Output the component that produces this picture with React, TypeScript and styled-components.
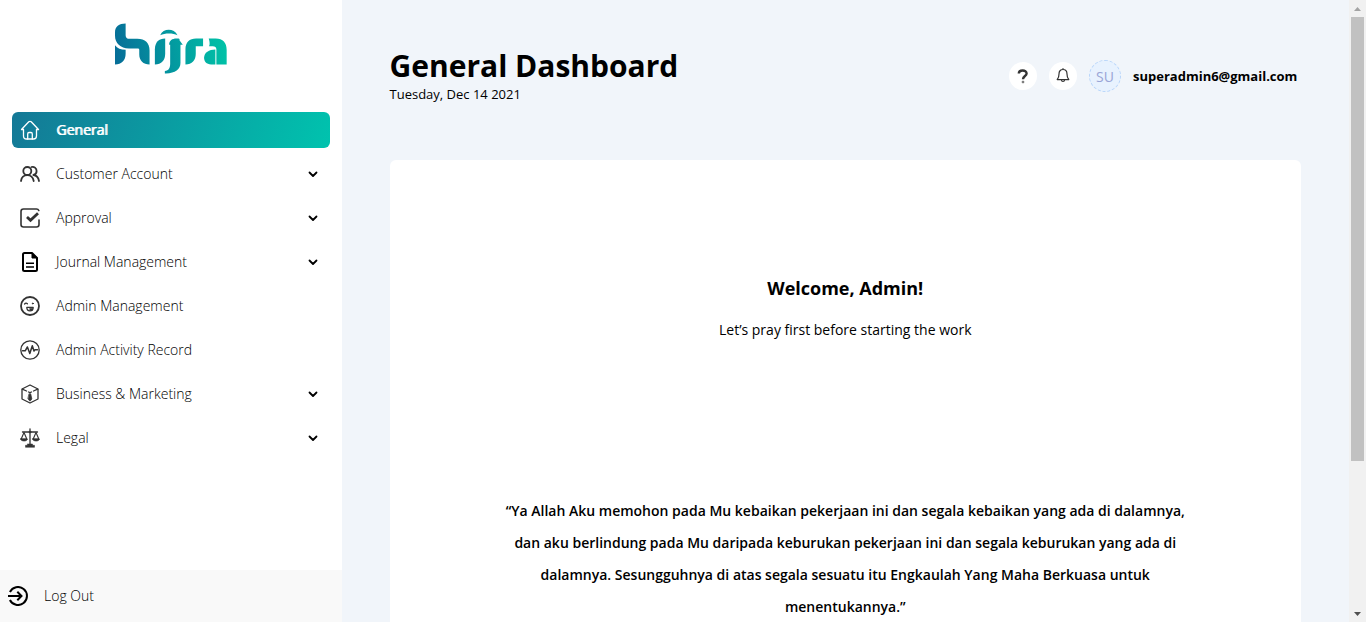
import React from "react";
import styled, { createGlobalStyle, css } from "styled-components";

const GlobalStyle = createGlobalStyle`
  *, *::before, *::after { box-sizing: border-box; }
  body {
    margin: 0;
    color: #000;
    background: #f1f5fa;
    font-family: "Open Sans", "Noto Sans", sans-serif;
    font-size: 14px;
  }
  h1, h2, p, ul { margin: 0; padding: 0; }
  button { font: inherit; color: inherit; border: 0; cursor: pointer; }
`;

const Shell = styled.div`
  display: flex;
  height: 100vh;
  overflow: hidden;
`;

const Sidebar = styled.aside`
  display: flex;
  flex-direction: column;
  flex: none;
  width: 25%;
  background: #fff;
`;

const LogoLink = styled.a`
  display: flex;
  justify-content: center;
  padding: 23px 0 38px;
`;

const Menu = styled.ul`
  display: flex;
  flex-direction: column;
  flex: 1;
  gap: 8px;
  padding: 0 12px;
  list-style: none;
`;

const MenuButton = styled.button<{ $active?: boolean }>`
  display: flex;
  align-items: center;
  gap: 16px;
  width: 100%;
  height: 36px;
  padding: 0 8px;
  border-radius: 6px;
  background: none;
  font-weight: 300;
  line-height: 18px;
  text-align: left;
  ${({ $active }) =>
    $active &&
    css`
      color: #fff;
      font-weight: 400;
      text-shadow: 1px 0 0 #fff;
      background: linear-gradient(110deg, #147896, #00c3ae);
    `}
`;

const MenuLabel = styled.span`
  flex: 1;
`;

const LogoutButton = styled.button`
  display: flex;
  align-items: center;
  gap: 16px;
  height: 52px;
  padding: 0 8px;
  background: #f9f9f9;
  font-weight: 300;
  line-height: 18px;
`;

const Main = styled.main`
  display: flex;
  flex-direction: column;
  flex: 1;
  min-width: 0;
  padding: 44px 48px 0;
  overflow: hidden;
`;

const Header = styled.header`
  display: flex;
  flex: none;
  justify-content: space-between;
  align-items: flex-start;
  height: 116px;
`;

const Title = styled.h1`
  font-size: 30px;
  line-height: 44px;
  font-weight: 700;
`;

const DateText = styled.p`
  font-size: 13px;
  line-height: 12px;
`;

const Account = styled.div`
  display: flex;
  align-items: center;
  gap: 12px;
  height: 64px;
`;

const RoundButton = styled.button`
  display: flex;
  align-items: center;
  justify-content: center;
  width: 28px;
  height: 28px;
  padding: 0;
  border-radius: 50%;
  background: #fff;
`;

const Avatar = styled.span`
  display: flex;
  align-items: center;
  justify-content: center;
  width: 32px;
  height: 32px;
  border: 1px dashed #b9d6fb;
  border-radius: 50%;
  background: #e8f2fe;
  color: #9aa5d6;
`;

const Email = styled.span`
  font-size: 13px;
  font-weight: 700;
  min-width: 168px;
`;

const Card = styled.section`
  flex: none;
  min-height: 740px;
  padding: 116px 112px;
  border-radius: 6px;
  background: #fff;
  text-align: center;
`;

const Welcome = styled.h2`
  font-size: 18px;
  line-height: 24px;
  font-weight: 700;
`;

const Subtitle = styled.p`
  margin-top: 20px;
  line-height: 20px;
`;

const Prayer = styled.p`
  margin-top: 155px;
  line-height: 32px;
  font-weight: 600;
`;

const ScrollTrack = styled.div`
  display: flex;
  flex-direction: column;
  align-items: center;
  flex: none;
  width: 17px;
  background: #f1f1f1;
`;

const ScrollArrow = styled.span`
  display: flex;
  align-items: center;
  justify-content: center;
  height: 17px;
`;

const ScrollThumb = styled.span`
  width: 13px;
  height: 75.5%;
  background: #c1c1c1;
`;

const ScrollRail = styled.div`
  display: flex;
  flex: 1;
`;

type IconProps = { children: React.ReactNode; size?: number; color?: string; strokeWidth?: number };

const Icon = ({ children, size = 20, color = "#333", strokeWidth = 1.5 }: IconProps) => (
  <svg
    width={size}
    height={size}
    viewBox={`0 0 ${size} ${size}`}
    fill="none"
    stroke={color}
    strokeWidth={strokeWidth}
    strokeLinecap="round"
    strokeLinejoin="round"
    aria-hidden="true"
  >
    {children}
  </svg>
);

const Logo = () => (
  <svg width="112" height="51" viewBox="45 38 337 152" role="img" aria-label="hijra">
    <defs>
      <linearGradient id="brand" gradientUnits="userSpaceOnUse" x1="45" y1="140" x2="381" y2="90">
        <stop offset="0" stopColor="#066e98" />
        <stop offset="1" stopColor="#00c3a7" />
      </linearGradient>
    </defs>
    <g fill="url(#brand)">
      <path d="M77 39V74Q77 85 89 85H112C136 85 149 98 149 120V162C130 162 118 150 118 132V118Q118 114 114 114H87C61 114 45 98 45 76V66C45 48 57 39 77 39Z" />
      <path d="M45 104C52 113 62 118 77 118V130C77 150 65 162 45 162Z" />
      <path d="M196 84V130C196 150 185 162 165 162V116C165 96 177 84 196 84Z" />
      <path d="M181 74C190 52 223 52 233 74C220 67 195 67 181 74Z" />
      <path d="M208 103C208 90 217 84 230 84H236Q241 84 239 89L249 103H242V158C242 178 225 190 195 189V182C207 181 211 172 211 160V103Z" />
      <path d="M310 84V107H288V130C288 150 277 162 257 162V116C257 96 269 84 289 84Z" />
      <path d="M327 84H348C370 84 381 97 381 118V162H350V116C350 111 346 107 339 107H328Q332 100 327 84Z" />
      <path d="M347 117V162H334C320 162 313 153 313 142C313 126 328 117 347 117Z" />
    </g>
  </svg>
);

const HomeIcon = () => (
  <Icon color="#fff" strokeWidth={1.3}>
    <path d="M1.5 9.5 8.8 1.8Q10 .8 11.2 1.8L18.5 9.5H16.5V16Q16.5 19 13.5 19H6.5Q3.5 19 3.5 16V9.5Z" />
    <path d="M7.7 19V14Q7.7 12.5 9 12.5H11Q12.3 12.5 12.3 14V19" />
  </Icon>
);

const UsersIcon = () => (
  <Icon strokeWidth={1.8}>
    <circle cx="7.3" cy="7" r="4" />
    <path d="M1 17C1.5 13.5 4 11.2 7.3 11.2S13 13.5 13.7 17" />
    <path d="M11.5 3C14 2.2 16.6 4.2 16.6 7C16.6 9 15.2 10.7 13.4 11C16.5 11.3 18.4 13.6 19 17" />
  </Icon>
);

const ApprovalIcon = () => (
  <Icon strokeWidth={1.6}>
    <path d="M19 12V16.5Q19 19 16.5 19H3.5Q1 19 1 16.5V3.5Q1 1 3.5 1H16.5Q18.2 1 18.8 2.5" />
    <path d="M7 9 10.5 12.3 18 5.2" strokeWidth="2.8" strokeLinecap="butt" strokeLinejoin="miter" />
  </Icon>
);

const JournalIcon = () => (
  <Icon color="#000" strokeWidth={2}>
    <path d="M12 1H4.5Q3 1 3 2.5V17.5Q3 19 4.5 19H15.5Q17 19 17 17.5V6Z" />
    <path d="M12 1.5V6H17Z" fill="#000" strokeWidth="1" />
    <path d="M6 11.3H14M6 15H14" strokeWidth="1.6" strokeLinecap="butt" />
  </Icon>
);

const SmileIcon = () => (
  <Icon strokeWidth={1.8}>
    <circle cx="10" cy="10" r="9" />
    <path d="M4.6 8Q6 6.4 7.4 7.8" strokeWidth="1.3" />
    <circle cx="12.8" cy="7.5" r=".5" fill="#333" strokeWidth="1" />
    <path d="M6.8 11.3H13.2C13.2 13.8 12 14.9 10 14.9S6.8 13.8 6.8 11.3Z" strokeWidth="1.3" />
    <path d="M9.8 12.3H12.6V14.3H9.8Z" fill="#333" strokeWidth=".4" />
  </Icon>
);

const ActivityIcon = () => (
  <Icon strokeWidth={1.5}>
    <circle cx="10" cy="10" r="9.2" strokeWidth="1.3" />
    <path d="M2.5 10.8H5.2L7.4 7L9.8 13.5L12.3 5.8L14 11L15 9.8H17.5" />
  </Icon>
);

const BusinessIcon = () => (
  <Icon strokeWidth={1.3}>
    <path d="M10 1 18 5V15L10 19L2 15V5Z" />
    <path d="M2.3 5.2 6.5 7M17.7 5.2 13.5 7M8.5 8 10 8.6 11.5 8" />
    <path d="M9.3 9.8H10.7L11.9 15L10 17.2L8.1 15Z" fill="#333" strokeWidth=".7" />
  </Icon>
);

const LegalIcon = () => (
  <Icon strokeWidth={1.3}>
    <path d="M10 .8V16M2.5 4H17.5" />
    <circle cx="10" cy="4" r="1.1" fill="#333" strokeWidth=".5" />
    <path d="M4 4.5 1.2 11H6.8ZM16 4.5 13.2 11H18.8Z" strokeWidth="1.1" />
    <path d="M.5 11H7.5C7 13.8 1 13.8 .5 11ZM12.5 11H19.5C19 13.8 13 13.8 12.5 11Z" fill="#333" strokeWidth=".6" />
    <path d="M7.5 16H12.5V17.3H14.5V19.3H5.5V17.3H7.5Z" fill="#333" strokeWidth=".5" />
  </Icon>
);

const LogoutIcon = () => (
  <Icon color="#000" strokeWidth={2}>
    <path d="M1.9 6A9 9 0 1 1 1.9 14" strokeLinecap="butt" />
    <path d="M0 10H13M9.3 5.7 13.5 10 9.3 14.3" strokeLinecap="butt" strokeLinejoin="miter" />
  </Icon>
);

const ChevronIcon = () => (
  <Icon size={18} color="#000" strokeWidth={1.8}>
    <path d="M5.5 7.5 9 11 12.5 7.5" />
  </Icon>
);

const HelpIcon = () => (
  <Icon size={18} strokeWidth={2.4}>
    <path d="M4.8 6.6C4.8 2.6 12.6 2.4 12.6 6.6C12.6 9 9 9.2 9 12.2" strokeLinecap="butt" />
    <circle cx="9" cy="15" r=".3" strokeWidth="2" />
  </Icon>
);

const BellIcon = () => (
  <Icon size={18} strokeWidth={1.2}>
    <path d="M9 2.5C6.2 2.5 5 4.6 5 7C5 10.3 4.3 11 3.2 12.6H14.8C13.7 11 13 10.3 13 7C13 4.6 11.8 2.5 9 2.5ZM9 2.5V1.6" />
    <path d="M7.5 13C7.5 15 10.5 15 10.5 13" />
  </Icon>
);

const menu = [
  { label: "General", icon: <HomeIcon />, active: true },
  { label: "Customer Account", icon: <UsersIcon />, expandable: true },
  { label: "Approval", icon: <ApprovalIcon />, expandable: true },
  { label: "Journal Management", icon: <JournalIcon />, expandable: true },
  { label: "Admin Management", icon: <SmileIcon /> },
  { label: "Admin Activity Record", icon: <ActivityIcon /> },
  { label: "Business & Marketing", icon: <BusinessIcon />, expandable: true },
  { label: "Legal", icon: <LegalIcon />, expandable: true },
];

export default function App() {
  return (
    <>
      <GlobalStyle />
      <Shell>
        <Sidebar>
          <LogoLink href="#"><Logo /></LogoLink>
          <Menu>
            {menu.map(({ label, icon, active, expandable }) => (
              <li key={label}>
                <MenuButton type="button" $active={active} aria-expanded={expandable ? false : undefined}>
                  {icon}
                  <MenuLabel>{label}</MenuLabel>
                  {expandable && <ChevronIcon />}
                </MenuButton>
              </li>
            ))}
          </Menu>
          <LogoutButton type="button">
            <LogoutIcon />
            Log Out
          </LogoutButton>
        </Sidebar>
        <Main>
          <Header>
            <div>
              <Title>General Dashboard</Title>
              <DateText>Tuesday, Dec 14 2021</DateText>
            </div>
            <Account>
              <RoundButton type="button" aria-label="Help"><HelpIcon /></RoundButton>
              <RoundButton type="button" aria-label="Notifications"><BellIcon /></RoundButton>
              <Avatar>SU</Avatar>
              <Email>superadmin6@gmail.com</Email>
            </Account>
          </Header>
          <Card>
            <Welcome>Welcome, Admin!</Welcome>
            <Subtitle>Let’s pray first before starting the work</Subtitle>
            <Prayer>
              “Ya Allah Aku memohon pada Mu kebaikan pekerjaan ini dan segala kebaikan yang ada di dalamnya,
              dan aku berlindung pada Mu daripada keburukan pekerjaan ini dan segala keburukan yang ada di
              dalamnya. Sesungguhnya di atas segala sesuatu itu Engkaulah Yang Maha Berkuasa untuk
              menentukannya.”
            </Prayer>
          </Card>
        </Main>
        <ScrollTrack aria-hidden="true">
          <ScrollArrow>
            <svg width="7" height="4" viewBox="0 0 7 4"><path d="M0 4 3.5 0 7 4Z" fill="#a3a3a3" /></svg>
          </ScrollArrow>
          <ScrollRail><ScrollThumb /></ScrollRail>
          <ScrollArrow>
            <svg width="7" height="4" viewBox="0 0 7 4"><path d="M0 0 3.5 4 7 0Z" fill="#505050" /></svg>
          </ScrollArrow>
        </ScrollTrack>
      </Shell>
    </>
  );
}
